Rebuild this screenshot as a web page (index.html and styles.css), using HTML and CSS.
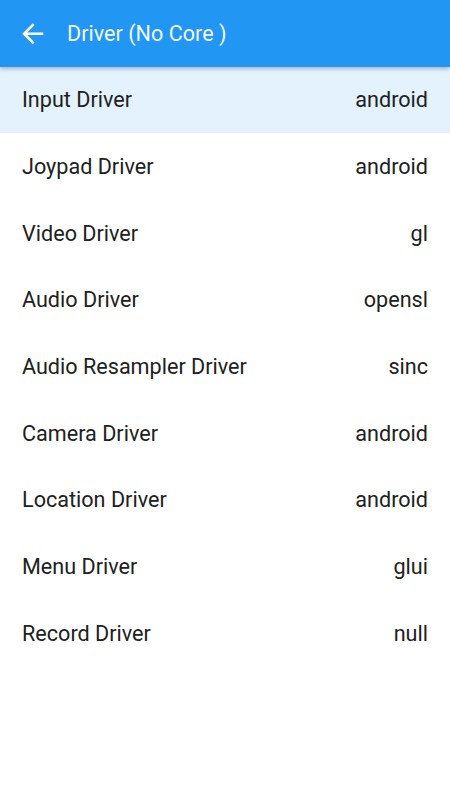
FILE: index.html
```html
<!DOCTYPE html>
<html lang="en">
<head>
  <meta charset="UTF-8" />
  <meta name="viewport" content="width=device-width, initial-scale=1.0"/>
  <title>Driver (No Core )</title>
  <link rel="stylesheet" href="styles.css">
</head>
<body>
  <div class="toolbar">
    <svg class="back" viewBox="0 0 24 24">
      <path d="M20 11H7.83l5.59-5.59L12 4l-8 8 8 8 1.41-1.41L7.83 13H20v-2z" fill="#fff"/>
    </svg>
    <span class="title">Driver (No Core )</span>
  </div>

  <div class="list">
    <div class="row selected"><span>Input Driver</span><span>android</span></div>
    <div class="row"><span>Joypad Driver</span><span>android</span></div>
    <div class="row"><span>Video Driver</span><span>gl</span></div>
    <div class="row"><span>Audio Driver</span><span>opensl</span></div>
    <div class="row"><span>Audio Resampler Driver</span><span>sinc</span></div>
    <div class="row"><span>Camera Driver</span><span>android</span></div>
    <div class="row"><span>Location Driver</span><span>android</span></div>
    <div class="row"><span>Menu Driver</span><span>glui</span></div>
    <div class="row"><span>Record Driver</span><span>null</span></div>
  </div>
</body>
</html>
```

FILE: styles.css
```css
body {
  margin: 0;
  font-family: Roboto, 'Noto Sans', sans-serif;
  background: #fff;
  color: #212121;
}
.toolbar {
  height: 66.67px;
  background: #2196f3;
  display: flex;
  align-items: center;
  padding-left: 17px;
  box-shadow: 0 2px 4px rgba(0,0,0,0.25);
  position: relative;
  z-index: 1;
}
.back {
  width: 31.5px;
  height: 31.5px;
  flex-shrink: 0;
}
.title {
  color: #fff;
  font-size: 21.6px;
  margin-left: 18.5px;
  opacity: 0.95;
}
.row {
  height: 66.67px;
  display: flex;
  align-items: center;
  justify-content: space-between;
  padding: 0 22px;
  font-size: 21.6px;
}
.selected {
  background: #e3f2fd;
}
```
